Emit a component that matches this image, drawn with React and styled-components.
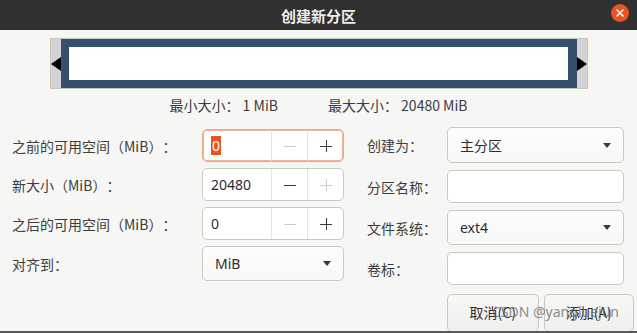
import React from "react";
import styled, { createGlobalStyle } from "styled-components";

const GlobalStyle = createGlobalStyle`
  html, body {
    margin: 0;
    padding: 0;
    background: #f6f6f5;
  }
  body {
    font-family: "Noto Sans", "Noto Sans CJK SC", sans-serif;
    text-spacing-trim: space-all;
  }
`;

const Window = styled.div`
  position: relative;
  width: 637px;
  height: 331px;
  border-bottom: 2px solid #595959;
  background: #f6f6f5;
  display: flex;
  flex-direction: column;
  overflow: hidden;
`;

const TitleBar = styled.div`
  position: relative;
  flex-shrink: 0;
  height: 30px;
  background: #303030;
  display: flex;
  align-items: center;
  justify-content: center;
`;

const Title = styled.div`
  color: #ececec;
  font-family: "Noto Sans CJK SC", sans-serif;
  font-size: 15px;
  font-weight: bold;
`;

const CloseButton = styled.div`
  position: absolute;
  right: 8px;
  top: 4px;
  width: 18px;
  height: 18px;
  border-radius: 50%;
  background: #e95420;
  display: flex;
  align-items: center;
  justify-content: center;
`;

const BarFrame = styled.div`
  margin: 8px auto 0;
  width: 536px;
  height: 49px;
  background: #d3d3d3;
  border: 1px solid #c6c6c6;
  display: flex;
  align-items: center;
`;

const ArrowCell = styled.div`
  width: 10px;
  display: flex;
  justify-content: ${(p) => (p.$dir === "left" ? "flex-start" : "flex-end")};
`;

const Arrow = styled.div`
  width: 0;
  height: 0;
  border-top: 7px solid transparent;
  border-bottom: 7px solid transparent;
  ${(p) =>
    p.$dir === "left"
      ? "border-right: 10px solid #000;"
      : "border-left: 10px solid #000;"}
`;

const Partition = styled.div`
  box-sizing: border-box;
  width: 516px;
  height: 49px;
  background: #fff;
  border-style: solid;
  border-color: #34506d;
  border-width: 8px 9px 8px 8px;
`;

const SizeInfo = styled.div`
  margin-top: 6px;
  display: flex;
  justify-content: center;
  gap: 50px;
  font-family: "Noto Sans CJK SC", "Noto Sans", sans-serif;
  font-size: 14px;
  line-height: 20px;
  color: #3c3c3c;
`;

const Form = styled.div`
  margin-top: 12px;
  padding: 0 13px 0 12px;
  display: flex;
  gap: 23px;
`;

const Column = styled.div`
  display: flex;
  flex-direction: column;
  gap: ${(p) => p.$gap}px;
  padding-top: ${(p) => p.$top || 0}px;
  width: ${(p) => p.$width}px;
`;

const Row = styled.div`
  display: flex;
  align-items: center;
`;

const Label = styled.div`
  width: ${(p) => p.$width}px;
  flex-shrink: 0;
  font-family: "Noto Sans CJK SC", "Noto Sans", sans-serif;
  font-size: 14px;
  color: #3d3d3d;
  white-space: nowrap;
`;

const Spin = styled.div`
  box-sizing: border-box;
  width: 142px;
  height: 33px;
  background: #fff;
  border: 1px solid ${(p) => (p.$focus ? "#f1a68c" : "#cdc7c2")};
  box-shadow: ${(p) => (p.$focus ? "inset 0 0 0 1px #f3b09a" : "none")};
  border-radius: 5px;
  display: flex;
`;

const SpinEntry = styled.div`
  flex: 1;
  display: flex;
  align-items: center;
  padding-left: 8px;
  font-size: 14px;
  color: #2e2e2e;
`;

const Selected = styled.span`
  background: #e95420;
  color: #fff;
  padding: 0 1px;
`;

const SpinButton = styled.div`
  width: 35px;
  border-left: 1px solid #e6e2df;
  display: flex;
  align-items: center;
  justify-content: center;
  color: ${(p) => (p.$disabled ? "#cbcbcb" : "#3b3b3b")};
`;

const Combo = styled.div`
  box-sizing: border-box;
  flex: ${(p) => (p.$fill ? 1 : "none")};
  width: ${(p) => (p.$fill ? "auto" : "142px")};
  height: ${(p) => p.$height}px;
  background: linear-gradient(#fcfcfc, #f8f8f8);
  border: 1px solid #cdc7c2;
  border-radius: 5px;
  padding: 0 12px 0 12px;
  display: flex;
  align-items: center;
  justify-content: space-between;
  font-size: 14px;
  color: #2e2e2e;
`;

const ComboArrow = styled.div`
  width: 0;
  height: 0;
  border-top: 5px solid #3a3a3a;
  border-left: 4.5px solid transparent;
  border-right: 4.5px solid transparent;
`;

const Entry = styled.div`
  box-sizing: border-box;
  flex: 1;
  height: 33px;
  background: #fff;
  border: 1px solid #cdc7c2;
  border-radius: 5px;
`;

const ButtonRow = styled.div`
  margin: 2px -10px 0 80px;
  display: flex;
  gap: 5px;
`;

const Button = styled.div`
  box-sizing: border-box;
  width: ${(p) => p.$width}px;
  height: 38px;
  border: 1px solid #cdc7c2;
  border-radius: 5px;
  background: linear-gradient(#f8f8f7, #efefee);
  display: flex;
  justify-content: center;
  padding-top: 7px;
  font-family: "Noto Sans CJK SC", "Noto Sans", sans-serif;
  font-size: 14px;
  color: #2e2e2e;
`;

const Watermark = styled.div`
  position: absolute;
  left: 492px;
  top: 302px;
  font-family: "Noto Sans", sans-serif;
  font-size: 14px;
  color: rgba(110, 110, 110, 0.8);
  white-space: nowrap;
  pointer-events: none;
`;

const Minus = () => (
  <svg width="12" height="12" viewBox="0 0 12 12">
    <path d="M0 6.5h12" stroke="currentColor" strokeWidth="1" />
  </svg>
);

const Plus = () => (
  <svg width="12" height="12" viewBox="0 0 12 12">
    <path d="M0 6.5h12M6.5 0v12" stroke="currentColor" strokeWidth="1" />
  </svg>
);

const SpinBox = ({ value, focus, minusOff, plusOff }) => (
  <Spin $focus={focus}>
    <SpinEntry>{focus ? <Selected>{value}</Selected> : value}</SpinEntry>
    <SpinButton $disabled={minusOff}>
      <Minus />
    </SpinButton>
    <SpinButton $disabled={plusOff}>
      <Plus />
    </SpinButton>
  </Spin>
);

export default function App() {
  return (
    <>
      <GlobalStyle />
      <Window>
        <TitleBar>
          <Title>创建新分区</Title>
          <CloseButton>
            <svg width="8" height="8" viewBox="0 0 8 8">
              <path d="M0.5 0.5l7 7M7.5 0.5l-7 7" stroke="#fff" strokeWidth="1.5" />
            </svg>
          </CloseButton>
        </TitleBar>

        <BarFrame>
          <ArrowCell $dir="left">
            <Arrow $dir="left" />
          </ArrowCell>
          <Partition />
          <ArrowCell $dir="right">
            <Arrow $dir="right" />
          </ArrowCell>
        </BarFrame>

        <SizeInfo>
          <span>最小大小： 1 MiB</span>
          <span>最大大小： 20480 MiB</span>
        </SizeInfo>

        <Form>
          <Column $width={332} $gap={6} $top={2}>
            <Row>
              <Label $width={190}>之前的可用空间（MiB）：</Label>
              <SpinBox value="0" focus minusOff />
            </Row>
            <Row>
              <Label $width={190}>新大小（MiB）：</Label>
              <SpinBox value="20480" plusOff />
            </Row>
            <Row>
              <Label $width={190}>之后的可用空间（MiB）：</Label>
              <SpinBox value="0" minusOff />
            </Row>
            <Row>
              <Label $width={190}>对齐到：</Label>
              <Combo $height={35}>
                MiB
                <ComboArrow />
              </Combo>
            </Row>
          </Column>

          <Column $width={257} $gap={7}>
            <Row>
              <Label $width={80}>创建为：</Label>
              <Combo $fill $height={36}>
                主分区
                <ComboArrow />
              </Combo>
            </Row>
            <Row>
              <Label $width={80}>分区名称：</Label>
              <Entry />
            </Row>
            <Row>
              <Label $width={80}>文件系统：</Label>
              <Combo $fill $height={35}>
                ext4
                <ComboArrow />
              </Combo>
            </Row>
            <Row>
              <Label $width={80}>卷标：</Label>
              <Entry />
            </Row>
            <ButtonRow>
              <Button $width={92}>取消(C)</Button>
              <Button $width={91}>添加(A)</Button>
            </ButtonRow>
          </Column>
        </Form>

        <Watermark>CSDN @yangluejun</Watermark>
      </Window>
    </>
  );
}
